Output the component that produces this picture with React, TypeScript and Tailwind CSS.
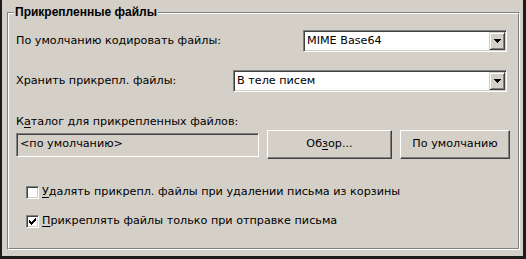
import React from "react";

function Arrow() {
  return (
    <svg width="7" height="4" viewBox="0 0 7 4" className="block">
      <path d="M0 0H7L3.5 4Z" fill="#000" shapeRendering="crispEdges" />
    </svg>
  );
}

function Combo({ value, className }: { value: string; className: string }) {
  return (
    <div
      className={`flex h-[22px] items-stretch bg-white border border-t-[#808080] border-l-[#808080] border-r-white border-b-white shadow-[inset_1px_1px_0_#404040,inset_-1px_-1px_0_#d4d0c8] p-[1px] ${className}`}
    >
      <div className="flex-1 flex items-center pl-[2px] leading-none">{value}</div>
      <div className="w-[16px] flex items-center justify-center bg-[#d4d0c8] border border-t-[#d4d0c8] border-l-[#d4d0c8] border-r-[#404040] border-b-[#404040] shadow-[inset_1px_1px_0_#fff,inset_-1px_-1px_0_#808080]">
        <Arrow />
      </div>
    </div>
  );
}

function Button({ children, className }: { children: React.ReactNode; className: string }) {
  return (
    <div
      className={`h-[29px] flex items-center justify-center bg-[#d4d0c8] border border-t-white border-l-white border-r-[#404040] border-b-[#404040] shadow-[inset_-1px_-1px_0_#808080] ${className}`}
    >
      {children}
    </div>
  );
}

function Check({ checked }: { checked: boolean }) {
  return (
    <div className="w-[13px] h-[13px] shrink-0 bg-white border border-t-[#808080] border-l-[#808080] border-r-white border-b-white shadow-[inset_1px_1px_0_#404040,inset_-1px_-1px_0_#d4d0c8] flex items-center justify-center">
      {checked && (
        <svg width="7" height="7" viewBox="0 0 7 7" className="block">
          <path
            d="M0 2h1v1h1v1h1v-1h1v-1h1v-1h1v-1h1v3h-1v1h-1v1h-1v1h-1v1h-1v-1h-1v-1h-1v-1h-1z"
            fill="#000"
            shapeRendering="crispEdges"
          />
        </svg>
      )}
    </div>
  );
}

export default function App() {
  return (
    <div className="w-[526px] h-[259px] bg-[#d4d0c8] border-l-2 border-r-[3px] border-b-[3px] border-[#1c1c1c] pl-[5px] pr-[3px] pt-[12px] pb-[6px] font-['DejaVu_Sans',sans-serif] text-[11.2px] text-black">
      <div className="relative h-full border border-t-[#808080] border-l-[#808080] border-r-white border-b-white">
        <div className="h-full border border-t-white border-l-white border-r-[#808080] border-b-[#808080] flex flex-col pl-[7px] pr-[8px]">
          <div className="mt-[16px] h-[22px] flex items-center justify-between pr-[3px]">
            <span>По умолчанию кодировать файлы:</span>
            <Combo value="MIME Base64" className="w-[204px]" />
          </div>
          <div className="mt-[18px] h-[22px] flex items-center justify-between pr-[3px]">
            <span>Хранить прикрепл. файлы:</span>
            <Combo value="В теле писем" className="w-[274px]" />
          </div>
          <div className="mt-[23px] h-[14px] leading-[14px]">
            К<u className="underline-offset-2">а</u>талог для прикрепленных файлов:
          </div>
          <div className="mt-[1px] h-[29px] flex items-center">
            <div className="w-[243px] h-[24px] flex items-center pl-[3px] bg-[#d4d0c8] border border-t-[#808080] border-l-[#808080] border-r-white border-b-white shadow-[inset_1px_1px_0_#404040,inset_-1px_-1px_0_#d4d0c8]">
              &lt;по умолчанию&gt;
            </div>
            <Button className="ml-[8px] w-[125px]">
              <span>
                Об<u className="underline-offset-2">з</u>ор...
              </span>
            </Button>
            <Button className="ml-[8px] w-[110px]">По умолчанию</Button>
          </div>
          <div className="mt-[25px] h-[16px] flex items-center pl-[10px]">
            <Check checked={false} />
            <span className="ml-[3px]">
              <u className="underline-offset-2">У</u>далять прикрепл. файлы при удалении письма из корзины
            </span>
          </div>
          <div className="mt-[13px] h-[16px] flex items-center pl-[10px]">
            <Check checked={true} />
            <span className="ml-[3px]">
              <u className="underline-offset-2">П</u>рикреплять файлы только при отправке письма
            </span>
          </div>
        </div>
        <div className="absolute left-[6px] top-[-8px] px-px bg-[#d4d0c8] font-bold leading-[14px] font-['Liberation_Sans',sans-serif] text-[12px]">
          Прикрепленные файлы
        </div>
      </div>
    </div>
  );
}
